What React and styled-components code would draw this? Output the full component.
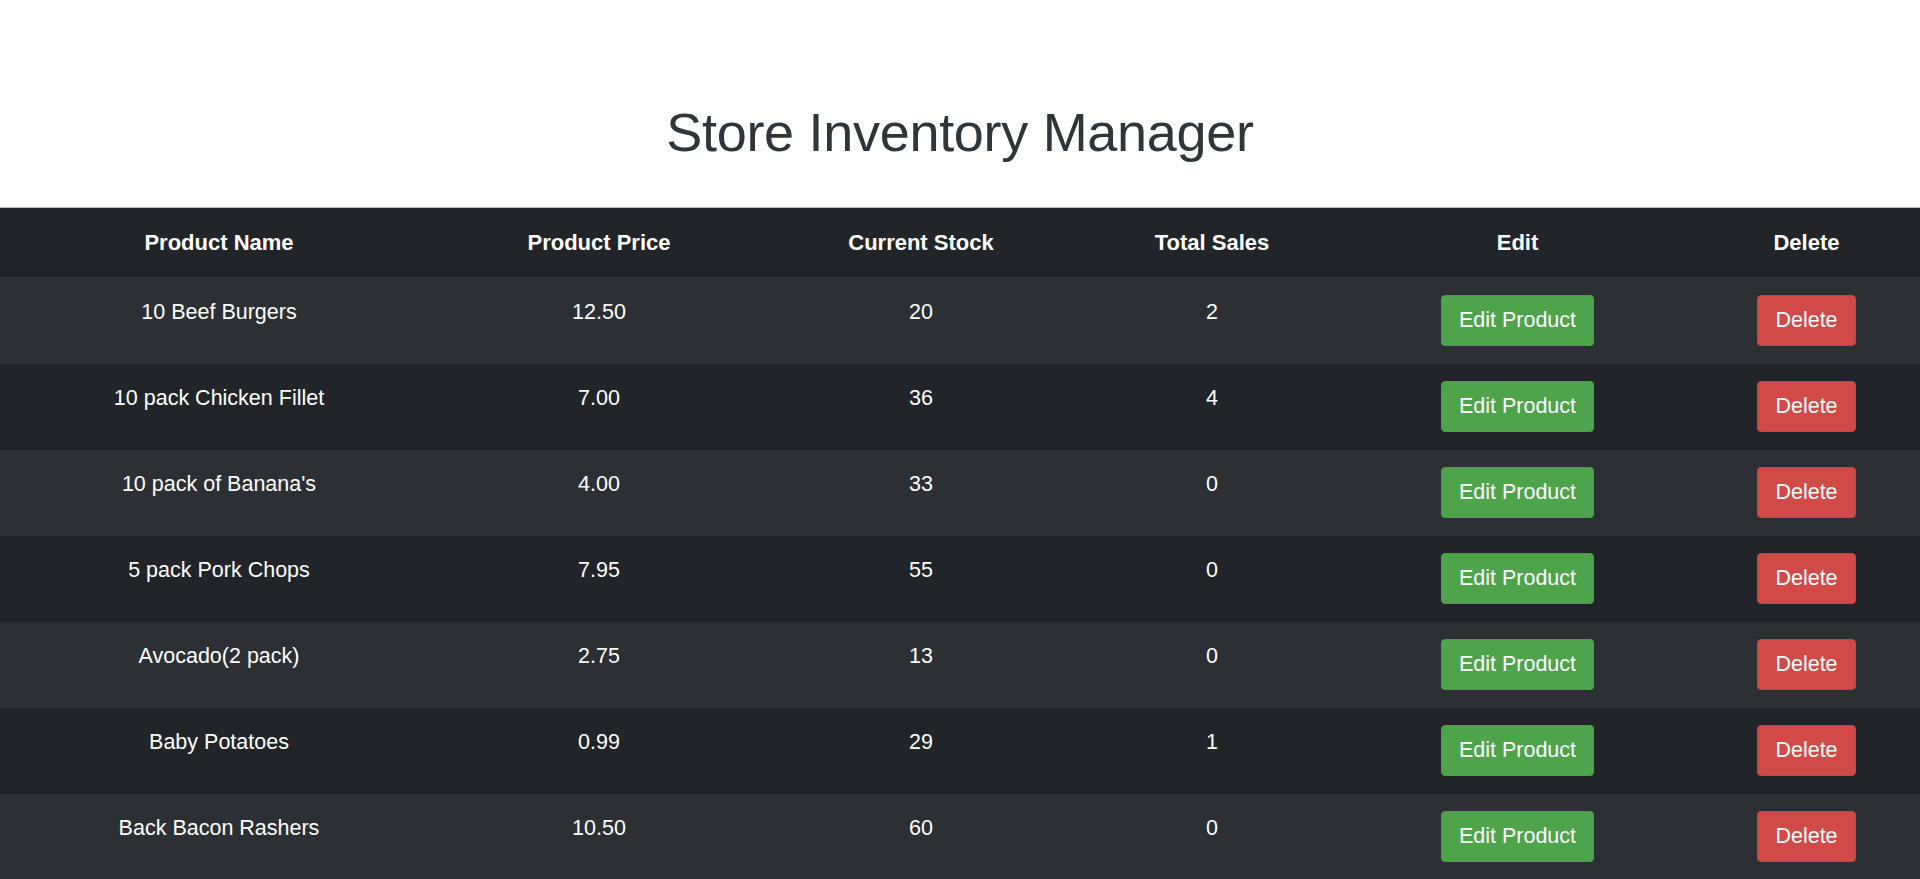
import React from 'react';
import styled, { createGlobalStyle } from 'styled-components';

const GlobalStyle = createGlobalStyle`
  body {
    margin: 0;
    background: #fff;
    font-family: "Liberation Sans", Arial, sans-serif;
    color: #212529;
  }
`

const Page = styled.div`
  width: 100%;
  height: 879px;
  overflow: hidden;
`

const Header = styled.header`
  height: 207px;
  display: flex;
  align-items: flex-start;
  justify-content: center;
`

const Title = styled.h1`
  margin: 100px 0 0;
  font-size: 54px;
  font-weight: 400;
  line-height: 64px;
  color: #30353a;
  letter-spacing: -0.3px;
`

const Table = styled.table`
  width: 100%;
  border-collapse: collapse;
  table-layout: fixed;
  border-top: 1px solid #b9bcbf;
  background: #212529;
  color: #fff;
  font-size: 21.5px;
`

const Th = styled.th`
  padding: 20px 15px 19px;
  line-height: 30px;
  font-size: 22px;
  font-weight: 700;
  text-align: center;
  vertical-align: top;
  border-bottom: 1px solid #32383e;
`

const Row = styled.tr`
  background: ${p => (p.$striped ? '#2c3035' : '#212529')};
`

const Td = styled.td`
  padding: 17px 15px 18px;
  line-height: 34px;
  text-align: center;
  vertical-align: top;
`

const Button = styled.button`
  display: inline-block;
  vertical-align: top;
  font-family: inherit;
  font-size: 21.5px;
  line-height: 31px;
  padding: 9px 17px;
  margin: 0;
  border-radius: 4px;
  color: #fff;
  cursor: pointer;
  border: 1px solid ${p => (p.$variant === 'danger' ? '#c9433f' : '#46a045')};
  background: ${p => (p.$variant === 'danger' ? '#d24a47' : '#4ea44b')};
`

const products = [
  { name: '10 Beef Burgers', price: '12.50', stock: 20, sales: 2 },
  { name: '10 pack Chicken Fillet', price: '7.00', stock: 36, sales: 4 },
  { name: "10 pack of Banana's", price: '4.00', stock: 33, sales: 0 },
  { name: '5 pack Pork Chops', price: '7.95', stock: 55, sales: 0 },
  { name: 'Avocado(2 pack)', price: '2.75', stock: 13, sales: 0 },
  { name: 'Baby Potatoes', price: '0.99', stock: 29, sales: 1 },
  { name: 'Back Bacon Rashers', price: '10.50', stock: 60, sales: 0 },
]

const widths = [438, 322, 322, 260, 351, 227]

export default function App() {
  return (
    <Page>
      <GlobalStyle />
      <Header>
        <Title>Store Inventory Manager</Title>
      </Header>
      <Table>
        <colgroup>
          {widths.map((w, i) => <col key={i} style={{ width: w }} />)}
        </colgroup>
        <thead>
          <tr>
            <Th>Product Name</Th>
            <Th>Product Price</Th>
            <Th>Current Stock</Th>
            <Th>Total Sales</Th>
            <Th>Edit</Th>
            <Th>Delete</Th>
          </tr>
        </thead>
        <tbody>
          {products.map((p, i) => (
            <Row key={p.name} $striped={i % 2 === 0}>
              <Td>{p.name}</Td>
              <Td>{p.price}</Td>
              <Td>{p.stock}</Td>
              <Td>{p.sales}</Td>
              <Td><Button>Edit Product</Button></Td>
              <Td><Button $variant="danger">Delete</Button></Td>
            </Row>
          ))}
        </tbody>
      </Table>
    </Page>
  )
}
